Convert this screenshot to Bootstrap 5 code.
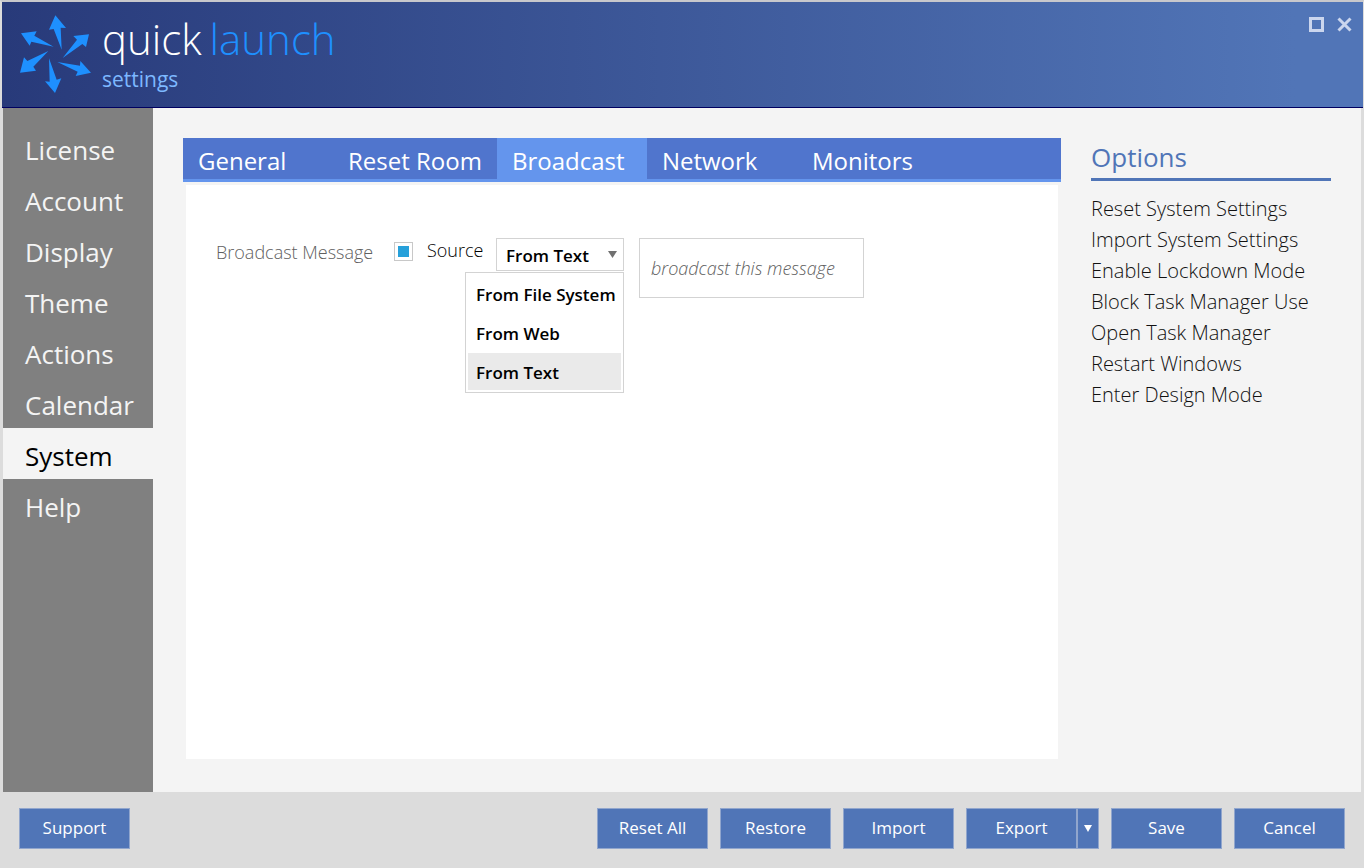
<!DOCTYPE html>
<html lang="en">
<head>
<meta charset="utf-8">
<meta name="viewport" content="width=device-width, initial-scale=1">
<title>Quick Launch Settings</title>
<link rel="stylesheet" href="https://cdn.jsdelivr.net/npm/bootstrap@5.3.0/dist/css/bootstrap.min.css">
<style>
  :root { --ql-blue: #5075b7; --ql-sky: #1e90ff; --ql-line: #d3d3d3; }
  body { font-family: "Open Sans", "Noto Sans", sans-serif; background: #f4f4f4; color: #000; }
  .ql-window { border: 2px solid #dcdcdc; border-top-color: #c8c8cc; border-right-width: 1px; }
  .ql-header { height: 106px; padding: 3px 11px 0 8px; background: linear-gradient(90deg, #283a7a 0%, #5175b7 95%); border-bottom: 1px solid #000060; }
  .ql-title { padding: 10px 0 0 2px; }
  .ql-brand { font-size: 42px; line-height: 48px; font-weight: 300; }
  .ql-brand span { color: var(--ql-sky); margin-left: 8px; }
  .ql-sub { font-size: 21px; line-height: 32px; color: #7db8ff; }
  .ql-winbtns { gap: 13px; padding-top: 9px; }
  .ql-side { width: 151px; background: #808080; padding-top: 14px; border-left: 1px solid #dcdcdc; }
  .ql-side .nav-link { color: #f4f4f4; font-size: 26px; line-height: 46px; padding: 5px 0 0 22px; }
  .ql-side .nav-link.active { color: #000; background: #f4f4f4; }
  .ql-content { padding: 30px 30px 33px; }
  .ql-tabs { background: #5075cd; border-bottom: 3px solid #6495ed; }
  .ql-tabs .nav-link { min-width: 150px; color: #fff; font-size: 24px; line-height: 36px; padding: 5px 15px 0; white-space: nowrap; }
  .ql-tabs .nav-link.active { background: #6495ed; }
  .ql-panel { background: #fff; margin: 3px 3px 0; padding: 53px 30px 30px; }
  .ql-msg { min-width: 161px; color: #606060; font-size: 18px; line-height: 28px; font-weight: 300; }
  .ql-check { width: 19px; height: 19px; appearance: none; border: 1px solid #c8c8c8; background: #fff; margin: 4px 14px 0 17px; padding: 3px; }
  .ql-check:checked { background: #26a0da content-box; }
  .ql-src { min-width: 69px; font-size: 18px; line-height: 25px; font-weight: 300; }
  .ql-select { appearance: none; width: 128px; height: 33px; border: 1px solid var(--ql-line); background: #fff; font-size: 17px; font-weight: 600; padding: 2px 9px 0; color: #000; }
  .ql-caret { top: 13px; right: 7px; }
  .ql-list { top: 34px; right: 0; width: 159px; border: 1px solid var(--ql-line); background: #fff; padding: 2px; font-size: 17px; font-weight: 600; z-index: 5; }
  .ql-list li { line-height: 37px; padding: 1px 0 0 8px; white-space: nowrap; height: 37px; margin-bottom: 2px; }
  .ql-list li:last-child { margin-bottom: 0; }
  .ql-list .ql-on { background: #eaeaea; }
  .ql-text { width: 225px; height: 60px; border: 1px solid var(--ql-line); margin-left: 15px; padding: 0 11px; font-size: 18px; font-style: italic; font-weight: 300; color: #606060; }
  .ql-options { width: 272px; padding: 30px 30px 0 0; border-right: 2px solid #dcdcdc; }
  .ql-options h2 { font-size: 26px; line-height: 38px; font-weight: 400; color: var(--ql-blue); border-bottom: 3px solid var(--ql-blue); margin-bottom: 12px; padding-bottom: 2px; }
  .ql-options a { display: block; font-size: 20px; line-height: 31px; font-weight: 300; color: #111; text-decoration: none; white-space: nowrap; }
  .ql-footer { background: #dcdcdc; padding: 16px 18px 17px 17px; }
  .ql-btn { width: 111px; height: 41px; border: 1px solid #91a6cd; border-radius: 0; background: var(--ql-blue); color: #fff; font-size: 17px; line-height: 36px; padding: 0 0 2px; }
  .ql-btn:hover { background: #4569a8; color: #fff; }
  .ql-actions { gap: 12px; }
  .ql-split { width: 22px; }
</style>
</head>
<body>
<div class="ql-window d-flex flex-column min-vh-100">
  <header class="ql-header d-flex">
    <svg width="90" height="95" viewBox="0 0 270 285" fill="#1e90ff" aria-hidden="true">
      <path d="M136 31 168 69 152 68 155 134 131 72 117 74Z"/>
      <path d="M237 88 228 126 217 117 158 159 201 104 190 93Z"/>
      <path d="M243 203 197 213 203 200 142 171 210 182 211 168Z"/>
      <path d="M135 264 105 229 119 230 117 160 140 224 154 220Z"/>
      <path d="M30 203 42 157 52 168 115 138 70 185 78 197Z"/>
      <path d="M33 85 80 79 73 92 131 125 64 110 59 122Z"/>
    </svg>
    <div class="ql-title">
      <div class="ql-brand text-white text-nowrap">quick<span>launch</span></div>
      <div class="ql-sub">settings</div>
    </div>
    <div class="ql-winbtns d-flex ms-auto align-items-start">
      <button class="btn p-0 border-0 lh-1" aria-label="Maximize"><svg class="d-block" width="15" height="19"><path d="M1.5 4.5h12v12h-12z" fill="none" stroke="#cbd6ee" stroke-width="3"/></svg></button>
      <button class="btn p-0 border-0 lh-1" aria-label="Close"><svg class="d-block" width="15" height="19"><path d="M1.500 4.500 13.500 16.500M13.500 4.500 1.500 16.500" stroke="#cbd6ee" stroke-width="3"/></svg></button>
    </div>
  </header>
  <div class="d-flex flex-grow-1">
    <nav class="ql-side nav flex-column flex-nowrap flex-shrink-0">
      <a class="nav-link" href="#">License</a>
      <a class="nav-link" href="#">Account</a>
      <a class="nav-link" href="#">Display</a>
      <a class="nav-link" href="#">Theme</a>
      <a class="nav-link" href="#">Actions</a>
      <a class="nav-link" href="#">Calendar</a>
      <a class="nav-link active" href="#" aria-current="page">System</a>
      <a class="nav-link" href="#">Help</a>
    </nav>
    <main class="ql-content d-flex flex-column flex-grow-1">
      <nav class="ql-tabs nav">
        <a class="nav-link" href="#">General</a>
        <a class="nav-link" href="#">Reset Room</a>
        <a class="nav-link active" href="#" aria-current="true">Broadcast</a>
        <a class="nav-link" href="#">Network</a>
        <a class="nav-link" href="#">Monitors</a>
      </nav>
      <section class="ql-panel flex-grow-1">
        <div class="d-flex align-items-start">
          <label class="ql-msg text-nowrap" for="enable">Broadcast Message</label>
          <input class="ql-check flex-shrink-0" type="checkbox" id="enable" checked>
          <label class="ql-src" for="source">Source</label>
          <div class="position-relative">
            <select class="ql-select d-block" id="source">
              <option>From File System</option>
              <option>From Web</option>
              <option selected>From Text</option>
            </select>
            <svg class="ql-caret position-absolute pe-none" width="9" height="7"><path d="M0 0h9L4.500 7Z" fill="#707070"/></svg>
            <ul class="ql-list position-absolute list-unstyled mb-0" role="listbox" aria-label="Source">
              <li role="option">From File System</li>
              <li role="option">From Web</li>
              <li class="ql-on" role="option" aria-selected="true">From Text</li>
            </ul>
          </div>
          <input class="ql-text" type="text" value="broadcast this message" aria-label="Message">
        </div>
      </section>
    </main>
    <aside class="ql-options flex-shrink-0">
      <h2>Options</h2>
      <a href="#">Reset System Settings</a>
      <a href="#">Import System Settings</a>
      <a href="#">Enable Lockdown Mode</a>
      <a href="#">Block Task Manager Use</a>
      <a href="#">Open Task Manager</a>
      <a href="#">Restart Windows</a>
      <a href="#">Enter Design Mode</a>
    </aside>
  </div>
  <footer class="ql-footer d-flex justify-content-between">
    <button class="ql-btn btn">Support</button>
    <div class="ql-actions d-flex">
      <button class="ql-btn btn">Reset All</button>
      <button class="ql-btn btn">Restore</button>
      <button class="ql-btn btn">Import</button>
      <div class="d-flex">
        <button class="ql-btn btn">Export</button>
        <button class="ql-btn ql-split btn" aria-label="Export options"><svg width="8" height="7"><path d="M0 0h8L4 7Z" fill="#fff"/></svg></button>
      </div>
      <button class="ql-btn btn">Save</button>
      <button class="ql-btn btn">Cancel</button>
    </div>
  </footer>
</div>
<script src="https://cdn.jsdelivr.net/npm/bootstrap@5.3.0/dist/js/bootstrap.bundle.min.js"></script>
</body>
</html>
